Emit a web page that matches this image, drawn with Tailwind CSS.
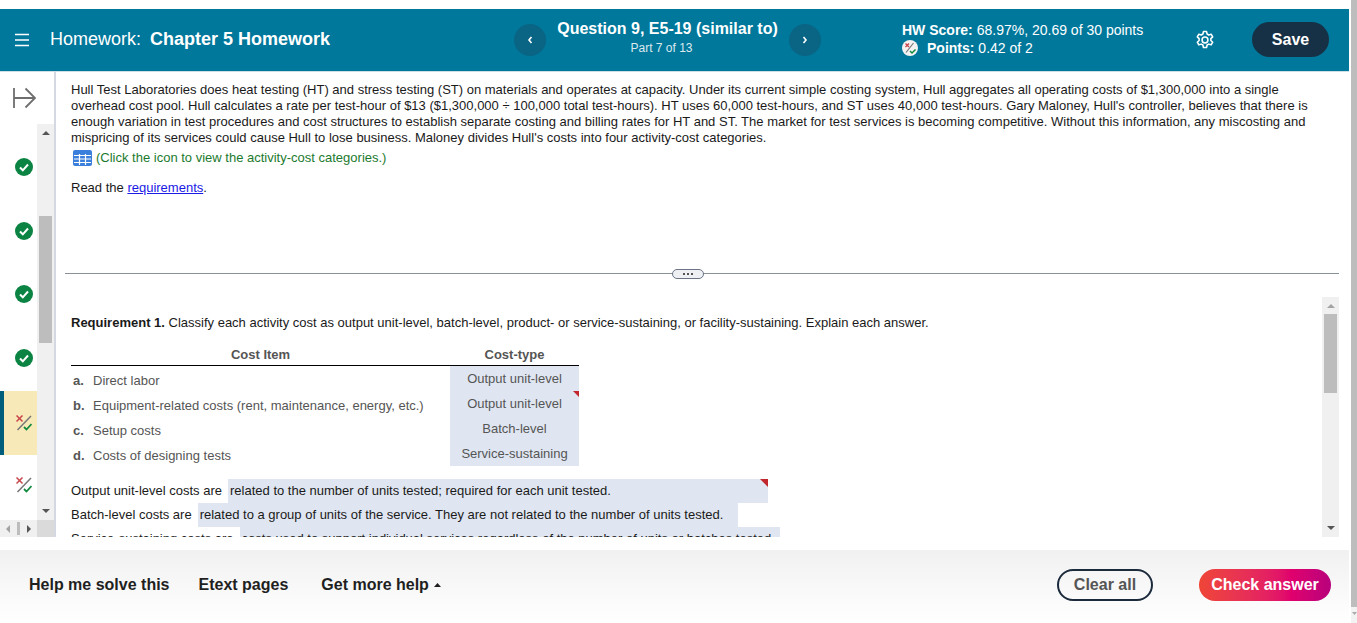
<!DOCTYPE html>
<html lang="en">
<head>
<meta charset="UTF-8">
<title>Chapter 5 Homework</title>
<script src="https://cdn.jsdelivr.net/npm/@tailwindcss/browser@4"></script>
</head>
<body class="h-[623px] w-[1357px] overflow-hidden bg-white font-['Liberation_Sans',Arial,sans-serif] flex">

  <div class="w-[1349px] h-full flex flex-col">

    <!-- Header -->
    <div class="mt-[9px] h-[62px] shrink-0 bg-[#00789c] border-b border-[#cfdfe6] flex items-center text-white box-content -mb-px">
      <svg class="ml-[14px] w-[16px] h-[14px]" viewBox="0 0 16 14" fill="none" stroke="#fff" stroke-width="1.4"><path d="M1 1.500h14M1 7h14M1 12.500h14"/></svg>
      <div class="ml-[20px] w-[464px] text-[18px] -mt-[2px]">Homework:&nbsp; <span class="font-bold -ml-px">Chapter 5 Homework</span></div>
      <div class="w-[32px] h-[32px] rounded-full bg-[#0a6484] flex items-center justify-center">
        <svg class="w-[8px] h-[10px]" viewBox="0 0 8 10" fill="none" stroke="#fff" stroke-width="1.6"><path d="M5.500 2 3 5l2.500 3"/></svg>
      </div>
      <div class="w-[243px] text-center -mt-[5px]">
        <div class="font-bold text-[16px] leading-[20px]">Question 9, E5-19 (similar to)</div>
        <div class="text-[12px] leading-[18px] text-[#dce9ee] pr-[12px]">Part 7 of 13</div>
      </div>
      <div class="w-[32px] h-[32px] rounded-full bg-[#0a6484] flex items-center justify-center">
        <svg class="w-[8px] h-[10px]" viewBox="0 0 8 10" fill="none" stroke="#fff" stroke-width="1.6"><path d="M2.500 2 5 5 2.500 8"/></svg>
      </div>
      <div class="ml-[81px] w-[292px] text-[14px] -mt-[2px]">
        <div class="leading-[18px]"><span class="font-bold">HW Score:</span> 68.97%, 20.69 of 30 points</div>
        <div class="leading-[18px] flex items-center">
          <svg class="w-[16px] h-[16px] mr-[9px]" viewBox="0 0 16 16" fill="none"><circle cx="8" cy="8" r="8" fill="#f3f3f3"/><path d="M3.500 3.500l3.500 3.500M7 3.500l-3.500 3.500" stroke="#c8464b" stroke-width="1.400"/><path d="M11.500 3 4 12.500" stroke="#777" stroke-width="1.200"/><path d="M8 11l2 2 3.500-3.500" stroke="#118a3e" stroke-width="1.500"/></svg>
          <span><span class="font-bold">Points:</span> 0.42 of 2</span>
        </div>
      </div>
      <svg class="w-[22px] h-[22px] -mt-px" viewBox="0 0 24 24" fill="none" stroke="#fff" stroke-width="1.700" stroke-linecap="round" stroke-linejoin="round"><path d="M10.300 2.800h3.400l.6 2.700 1.700 1 2.700-.8 1.700 2.900-2 1.900v2l2 1.900-1.700 2.900-2.700-.8-1.700 1-.6 2.700h-3.400l-.6-2.700-1.700-1-2.700.8-1.700-2.900 2-1.900v-2l-2-1.900 1.700-2.900 2.700.8 1.700-1z"/><circle cx="12" cy="12" r="3.200"/></svg>
      <button class="ml-[36px] w-[77px] h-[35px] -mt-[1px] rounded-full bg-[#163145] text-white font-bold text-[16px]">Save</button>
    </div>

    <!-- Middle -->
    <div class="flex-1 min-h-0 flex">

      <!-- Sidebar -->
      <div class="w-[56px] shrink-0 border-r-2 border-[#d3d8e3] flex flex-col">
        <div class="h-[53px] shrink-0 pt-[16px] pl-[13px]">
          <svg class="w-[23px] h-[22px]" viewBox="0 0 23 22" fill="none" stroke="#6e6e6e" stroke-width="1.800"><path d="M1 1v20M1.500 11H22M12.500 1.500 22 11l-9.500 9.500"/></svg>
        </div>
        <div class="flex-1 min-h-0 flex">
          <div class="w-[37px] overflow-hidden flex flex-col pt-[10px]">
            <div class="h-[64px] shrink-0 flex pt-[24px] pl-[15px]"><svg class="w-[18px] h-[18px]" viewBox="0 0 18 18"><circle cx="9" cy="9" r="9" fill="#0b8443"/><path d="M5 9.500l2.800 2.800L13 6.500" fill="none" stroke="#fff" stroke-width="2"/></svg></div>
            <div class="h-[63px] shrink-0 flex pt-[24px] pl-[15px]"><svg class="w-[18px] h-[18px]" viewBox="0 0 18 18"><circle cx="9" cy="9" r="9" fill="#0b8443"/><path d="M5 9.500l2.800 2.800L13 6.500" fill="none" stroke="#fff" stroke-width="2"/></svg></div>
            <div class="h-[64px] shrink-0 flex pt-[24px] pl-[15px]"><svg class="w-[18px] h-[18px]" viewBox="0 0 18 18"><circle cx="9" cy="9" r="9" fill="#0b8443"/><path d="M5 9.500l2.800 2.800L13 6.500" fill="none" stroke="#fff" stroke-width="2"/></svg></div>
            <div class="h-[66px] shrink-0 flex pt-[24px] pl-[15px]"><svg class="w-[18px] h-[18px]" viewBox="0 0 18 18"><circle cx="9" cy="9" r="9" fill="#0b8443"/><path d="M5 9.500l2.800 2.800L13 6.500" fill="none" stroke="#fff" stroke-width="2"/></svg></div>
            <div class="h-[64px] shrink-0 bg-[#f7e9b8] border-l-4 border-[#005e7d] pt-[24px] pl-[12px]"><svg class="w-[16px] h-[16px]" viewBox="0 0 16 16" fill="none"><path d="M.5.500l6 6M6.500.500l-6 6" stroke="#c8464b" stroke-width="1.500"/><path d="M15 1 1.500 15" stroke="#777" stroke-width="1.500"/><path d="M8 12l2.500 2.500L15.500 9" stroke="#118a3e" stroke-width="1.800"/></svg></div>
            <div class="h-[64px] shrink-0 pt-[22px] pl-[16px]"><svg class="w-[16px] h-[16px]" viewBox="0 0 16 16" fill="none"><path d="M.5.500l6 6M6.500.500l-6 6" stroke="#c8464b" stroke-width="1.500"/><path d="M15 1 1.500 15" stroke="#777" stroke-width="1.500"/><path d="M8 12l2.500 2.500L15.500 9" stroke="#118a3e" stroke-width="1.800"/></svg></div>
          </div>
          <!-- sidebar scrollbar -->
          <div class="w-[17px] bg-[#f0f0f0] flex flex-col items-center">
            <svg class="w-[8px] h-[4px] mt-[7px]" viewBox="0 0 8 4"><path d="M0 4 4 0l4 4z" fill="#555"/></svg>
            <div class="w-[13px] h-[127px] bg-[#bdbdbd] mt-[81px]"></div>
            <div class="flex-1"></div>
            <svg class="w-[8px] h-[4px] mb-[7px]" viewBox="0 0 8 4"><path d="M0 0 4 4l4-4z" fill="#555"/></svg>
          </div>
        </div>
        <div class="h-[17px] shrink-0 flex">
          <div class="w-[37px] bg-[#f0f0f0] flex items-center">
            <svg class="ml-[6px] w-[4px] h-[8px]" viewBox="0 0 4 8"><path d="M4 0 0 4l4 4z" fill="#a3a3a3"/></svg>
            <div class="ml-[7px] w-[3px] h-[13px] bg-[#bdbdbd]"></div>
            <svg class="ml-[7px] w-[4px] h-[8px]" viewBox="0 0 4 8"><path d="M0 0l4 4-4 4z" fill="#555"/></svg>
          </div>
          <div class="w-[17px] bg-[#dadada]"></div>
        </div>
      </div>

      <!-- Content -->
      <div class="flex-1 min-w-0 flex flex-col">
        <!-- question text -->
        <div class="h-[193px] shrink-0 pl-[15px] pr-[20px] pt-[11px] text-[13px] leading-[16px] text-[#1a1a1a]">
          <p>Hull Test Laboratories does heat testing (HT) and stress testing (ST) on materials and operates at capacity. Under its current simple costing system, Hull aggregates all operating costs of $1,300,000 into a single overhead cost pool. Hull calculates a rate per test-hour of $13 ($1,300,000 ÷ 100,000 total test-hours). HT uses 60,000 test-hours, and ST uses 40,000 test-hours. Gary Maloney, Hull's controller, believes that there is enough variation in test procedures and cost structures to establish separate costing and billing rates for HT and ST. The market for test services is becoming competitive. Without this information, any miscosting and mispricing of its services could cause Hull to lose business. Maloney divides Hull's costs into four activity-cost categories.</p>
          <p class="flex items-center mt-[3px] h-[18px] text-[#1c7a2e]">
            <svg class="ml-[2px] mr-[4px] w-[19px] h-[16px]" viewBox="0 0 19 16"><rect width="19" height="16" rx="2" fill="#3b7fdc"/><path d="M1 5.500h17M1 9h17M1 12.500h17M6.500 4v11M12.500 4v11" stroke="#fff" stroke-width="1.200"/></svg>
            (Click the icon to view the activity-cost categories.)
          </p>
          <p class="mt-[13px]">Read the <a class="text-[#1a1ae6] underline">requirements</a>.</p>
        </div>

        <!-- splitter -->
        <div class="h-[24px] shrink-0 ml-[9px] mr-[10px] relative flex items-center">
          <div class="w-full h-px bg-[#8a9099] -mt-[6px]"></div>
          <div class="absolute left-[607px] top-[5px] w-[32px] h-[10px] rounded-full bg-[#eef0f4] border border-[#6b7585] flex items-center justify-center gap-[2px]">
            <span class="w-[2px] h-[2px] bg-[#555]"></span><span class="w-[2px] h-[2px] bg-[#555]"></span><span class="w-[2px] h-[2px] bg-[#555]"></span>
          </div>
        </div>

        <!-- answer panel -->
        <div class="h-[240px] shrink-0 flex mt-[9px]">
          <div class="flex-1 min-w-0 overflow-hidden pl-[15px] pt-[18px] text-[13px]">
            <p class="leading-[16px] text-[#1a1a1a]"><span class="font-bold">Requirement 1.</span> Classify each activity cost as output unit-level, batch-level, product- or service-sustaining, or facility-sustaining. Explain each answer.</p>
            <table class="mt-[14px] w-[508px] table-fixed border-separate border-spacing-0 text-[#555]">
              <thead>
                <tr class="h-[21px]">
                  <th class="w-[379px] text-center font-bold border-b border-black">Cost Item</th>
                  <th class="text-center font-bold border-b border-black">Cost-type</th>
                </tr>
              </thead>
              <tbody>
                <tr class="h-[25px]"><td class="pl-[2px] pt-[4px]"><b class="inline-block w-[20px]">a.</b>Direct labor</td><td class="bg-[#e0e6f1] text-center">Output unit-level</td></tr>
                <tr class="h-[25px]"><td class="pl-[2px] pt-[4px]"><b class="inline-block w-[20px]">b.</b>Equipment-related costs (rent, maintenance, energy, etc.)</td><td class="bg-[#e0e6f1] text-center relative"><span class="absolute top-0 right-0 w-0 h-0 border-t-[6px] border-l-[6px] border-t-[#c1272d] border-l-transparent"></span>Output unit-level</td></tr>
                <tr class="h-[25px]"><td class="pl-[2px] pt-[4px]"><b class="inline-block w-[20px]">c.</b>Setup costs</td><td class="bg-[#e0e6f1] text-center">Batch-level</td></tr>
                <tr class="h-[25px]"><td class="pl-[2px] pt-[4px]"><b class="inline-block w-[20px]">d.</b>Costs of designing tests</td><td class="bg-[#e0e6f1] text-center">Service-sustaining</td></tr>
              </tbody>
            </table>
            <div class="mt-[13px] text-[#1a1a1a]">
              <div class="flex h-[24px] items-center">Output unit-level costs are<span class="ml-[6px] w-[540px] h-full bg-[#e0e6f1] pl-[2px] flex items-center relative">related to the number of units tested; required for each unit tested.<span class="absolute top-0 right-0 w-0 h-0 border-t-[8px] border-l-[8px] border-t-[#c1272d] border-l-transparent"></span></span></div>
              <div class="flex h-[24px] items-center">Batch-level costs are<span class="ml-[6px] w-[540px] h-full bg-[#e0e6f1] pl-[2px] flex items-center">related to a group of units of the service. They are not related to the number of units tested.</span></div>
              <div class="flex h-[24px] items-center">Service-sustaining costs are<span class="ml-[6px] w-[540px] h-full bg-[#e0e6f1] pl-[2px] flex items-center">costs used to support individual services regardless of the number of units or batches tested.</span></div>
            </div>
          </div>
          <div class="w-[17px] shrink-0 mr-[10px] bg-[#f0f0f0] flex flex-col items-center">
            <svg class="w-[8px] h-[4px] mt-[7px]" viewBox="0 0 8 4"><path d="M0 4 4 0l4 4z" fill="#a3a3a3"/></svg>
            <div class="w-[13px] h-[79px] bg-[#bdbdbd] mt-[6px]"></div>
            <div class="flex-1"></div>
            <svg class="w-[8px] h-[4px] mb-[7px]" viewBox="0 0 8 4"><path d="M0 0 4 4l4-4z" fill="#555"/></svg>
          </div>
        </div>
      </div>
    </div>

    <!-- Footer -->
    <div class="h-[73px] shrink-0 mt-[13px] bg-gradient-to-b from-[#f1f1f1] to-white flex items-center font-bold text-[16px] text-[#1f1f1f] pb-[4px] pl-[29px]">
      <span>Help me solve this</span>
      <span class="ml-[29px]">Etext pages</span>
      <span class="ml-[33px] flex items-center">Get more help<svg class="ml-[5px] w-[7px] h-[4px]" viewBox="0 0 7 4"><path d="M0 4 3.500 0 7 4z" fill="#1f1f1f"/></svg></span>
      <button class="ml-auto w-[96px] h-[32px] rounded-full border-2 border-[#1c2b3c] text-[#555] font-bold text-[16px]">Clear all</button>
      <button class="ml-[46px] mr-[18px] w-[132px] h-[32px] rounded-full bg-gradient-to-r from-[#ef4536] via-[#e0006d] via-70% to-[#b8007c] text-white font-bold text-[16px]">Check answer</button>
    </div>
  </div>

  <!-- page scrollbar -->
  <div class="w-[8px] h-full bg-[#f3f3f3] border-l-2 border-white flex flex-col items-end">
    <div class="w-[6px] h-[607px] bg-[#bdbdbd]"></div>
    <svg class="w-[5px] h-[3px] mt-[5px] mr-0" viewBox="0 0 5 3"><path d="M0 0 2.500 3 5 0z" fill="#aaa"/></svg>
  </div>
</body>
</html>
